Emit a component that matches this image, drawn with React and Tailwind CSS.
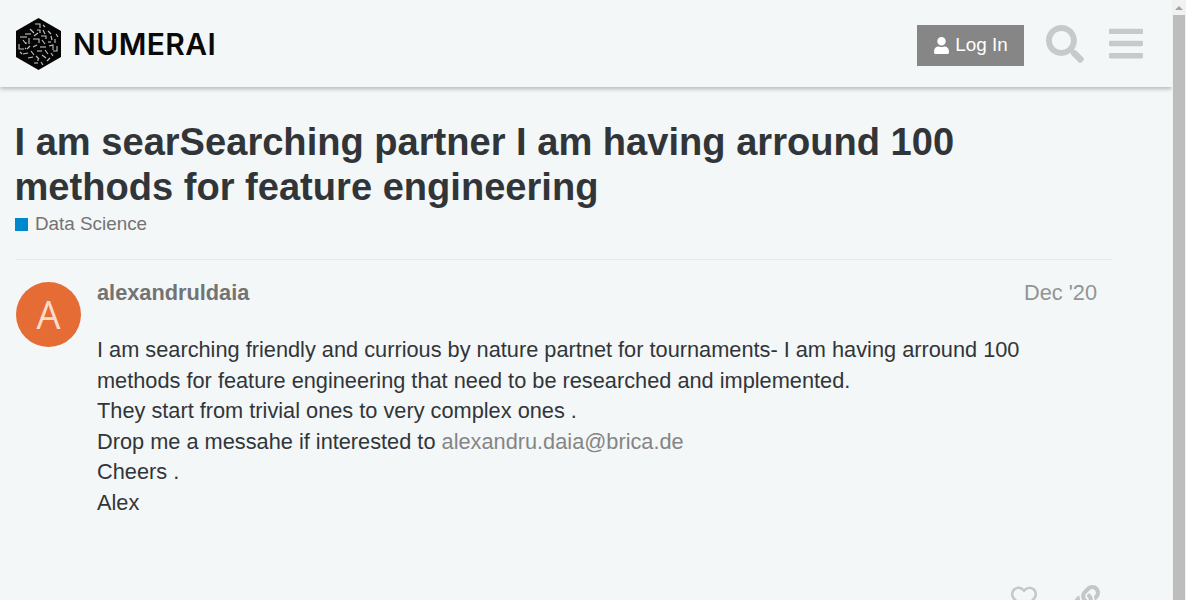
import { FaBars, FaLink, FaRegHeart, FaSearch, FaUser } from "react-icons/fa";

const font = { fontFamily: '"Liberation Sans", Arial, sans-serif' };

// little angular dashes inside the hexagon logo
const logoMarks = [
  "M20 6h5v4", "M28 7l2 2", "M15 11l4 4", "M22 12h3v3", "M28 12l2 4", "M33 13l3 3", "M10 16h6", "M19 18l4-3",
  "M26 18h5v3", "M36 18l1 4", "M41 16l2 3", "M5 19h7", "M8 22l3 4", "M14 20v6", "M18 21h6v4",
  "M27 22l3 4", "M33 24h3", "M40 21v4", "M4 26v5h5", "M12 31l3-3", "M18 29l4-2",
  "M25 29h6", "M34 28l4-1v3", "M42 28v5h-4", "M8 36l5-1", "M16 33l3 4", "M22 33h5",
  "M30 32l3 4", "M36 35l2 3", "M5 34l2 2", "M13 40l5-1", "M21 38l3 3", "M27 37l4 3", "M35 40l-3 3",
  "M19 45h4", "M26 44l2 3", "M23 41v2", "M10 25h2", "M37 31h2", "M11 30l-1 1",
];

function NumeraiLogo() {
  return (
    <div className="flex items-center gap-[11px]">
      <svg width="47" height="52" viewBox="0 0 47 52" className="shrink-0">
        <path d="M23.5 0L46 13v26L23.5 52 1 39V13z" fill="#050505" />
        <g fill="none" stroke="#c4c4c4" strokeWidth="1.1" strokeLinejoin="miter">
          {logoMarks.map((d) => (
            <path key={d} d={d} />
          ))}
        </g>
      </svg>
      <span
        className="text-[30px] leading-none font-semibold tracking-[0.4px] text-[#0a0a0a]"
        style={{ fontFamily: "Inter, sans-serif" }}
      >
        NUMERAI
      </span>
    </div>
  );
}

function Header() {
  return (
    <header className="flex h-[87px] shrink-0 items-center justify-between bg-[#f3f7f8] pr-[29px] pl-[15px] shadow-[0_2px_4px_rgba(0,0,0,0.25)]">
      <NumeraiLogo />
      <div className="flex items-center">
        <button className="mt-[4px] flex h-[41px] w-[107px] items-center justify-center gap-[5px] bg-[#868686] text-[18.85px] text-white">
          <FaUser className="h-[17px] w-[17px]" />
          Log In
        </button>
        <FaSearch className="ml-[22px] h-[38px] w-[38px] text-[#c8c9ca]" />
        <FaBars className="ml-[25px] h-[39px] w-[34px] text-[#c8c9ca]" />
      </div>
    </header>
  );
}

function Post() {
  return (
    <article className="mt-[23px] mr-[60px] flex border-t border-[#e8ebed] pt-[22px]">
      <div
        className="ml-[1px] flex h-[65px] w-[65px] shrink-0 items-center justify-center rounded-full bg-[#e56d35] text-[38px] font-medium text-[#fbdccb]"
        style={{ fontFamily: '"Open Sans", sans-serif' }}
      >
        A
      </div>
      <div className="ml-[16px] flex-1 pr-[15px]">
        <div className="flex items-center justify-between leading-[22px]">
          <span className="text-[21.75px] font-bold text-[#737373]">alexandruldaia</span>
          <span className="text-[21.75px] text-[#949494]">Dec '20</span>
        </div>
        <div className="mt-[31px] pr-[60px] text-[21.75px] leading-[30.6px] text-[#323538]">
          <p>
            I am searching friendly and currious by nature partnet for tournaments- I am having arround 100 methods for
            feature engineering that need to be researched and implemented.
          </p>
          <p>They start from trivial ones to very complex ones .</p>
          <p>
            Drop me a messahe if interested to <a className="text-[#858585]">alexandru.daia@brica.de</a>
          </p>
          <p>Cheers .</p>
          <p>Alex</p>
        </div>
        <div className="mt-[66px] mr-[-3px] flex justify-end gap-[37px] text-[#c4c6c7]">
          <FaRegHeart className="h-[26px] w-[26px]" />
          <FaLink className="h-[26px] w-[26px]" />
        </div>
      </div>
    </article>
  );
}

function Scrollbar() {
  return (
    <div className="flex w-[14px] shrink-0 flex-col bg-[#f1f1f1]">
      <div className="flex h-[15px] shrink-0 items-center justify-center">
        <div className="h-0 w-0 border-x-[4px] border-b-[4px] border-x-transparent border-b-[#a3a3a3]" />
      </div>
      <div className="mx-[1px] flex-1 bg-[#bdbdbd]" />
    </div>
  );
}

export default function App() {
  return (
    <div className="flex h-[600px] w-[1186px] overflow-hidden bg-[#f3f7f8]" style={font}>
      <div className="flex w-[1172px] flex-col">
        <Header />
        <main className="flex-1 pl-[15px]">
          <h1 className="mt-[33px] ml-[-0.5px] text-[38.08px] leading-[45px] font-bold text-[#323538]">
            I am searSearching partner I am having arround 100
            <br />
            methods for feature engineering
          </h1>
          <div className="mt-[2px] flex items-center gap-[7px] text-[18.85px] leading-[24px] text-[#737373]">
            <span className="h-[13px] w-[13px] bg-[#0088cc]" />
            Data Science
          </div>
          <Post />
        </main>
      </div>
      <Scrollbar />
    </div>
  );
}
